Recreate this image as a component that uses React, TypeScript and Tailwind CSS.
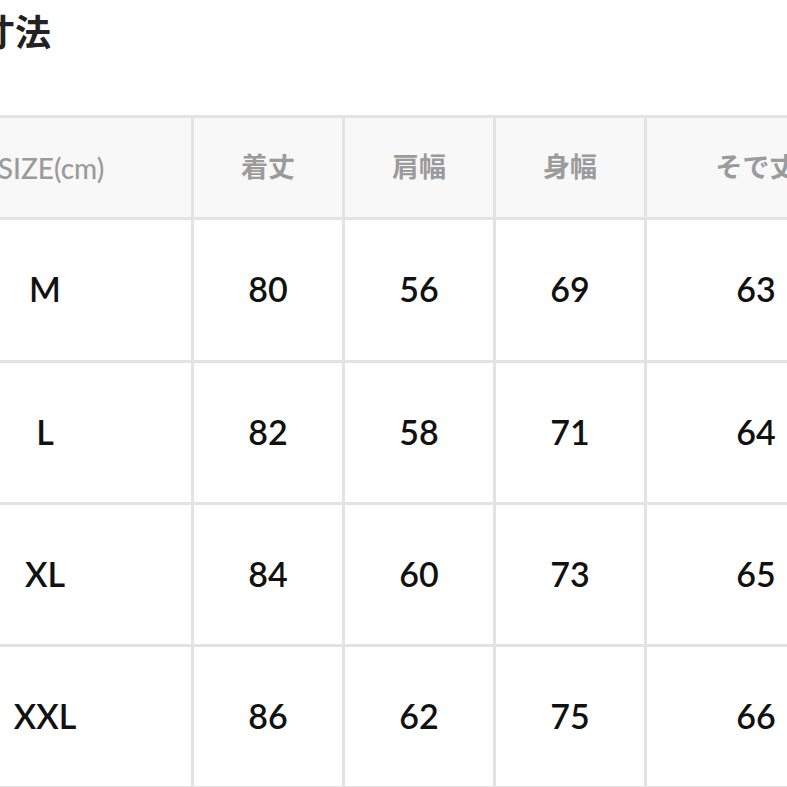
const columns = ["SIZE(cm)", "着丈", "肩幅", "身幅", "そで丈"]

const rows = [
  { size: "M", values: [80, 56, 69, 63] },
  { size: "L", values: [82, 58, 71, 64] },
  { size: "XL", values: [84, 60, 73, 65] },
  { size: "XXL", values: [86, 62, 75, 66] },
]

const font = { fontFamily: 'Lato, "Noto Sans CJK JP", sans-serif' }

export default function App() {
  return (
    <div className="w-[787px] h-[787px] overflow-hidden bg-white" style={font}>
      {/* Title */}
      <h1 className="-ml-[21px] pt-[14px] text-[36px] leading-none font-bold text-[#222]">
        寸法
      </h1>

      {/* Size table */}
      <div className="mt-[65px] w-[880px] bg-[#e3e3e3] py-[3px]">
        <div className="grid grid-cols-[191px_148px_148px_148px_223px] grid-rows-[99px_140px_139px_139px_139px] gap-[3px]">
          {columns.map((col, i) => (
            <div
              key={col}
              className={`flex items-center justify-center bg-[#f8f8f8] text-[#9b9b9b] ${
                i === 0
                  ? "pr-[89px] text-[28px] font-medium"
                  : i === 4
                    ? "pr-[5px] text-[27px] font-semibold"
                    : "text-[27px] font-semibold"
              }`}
            >
              <span className="whitespace-nowrap">{col}</span>
            </div>
          ))}

          {rows.map((row) => (
            <>
              <div
                key={row.size}
                className="flex items-center justify-center bg-white pr-[101px] pb-[3px] text-[34px] font-semibold text-[#111]"
              >
                {row.size}
              </div>
              {row.values.map((v, idx) => (
                <div
                  key={row.size + idx}
                  className={`flex items-center justify-center bg-white pb-[3px] text-[34px] font-semibold text-[#111] ${
                    idx === 3 ? "pr-[5px]" : ""
                  }`}
                >
                  {v}
                </div>
              ))}
            </>
          ))}
        </div>
      </div>
    </div>
  )
}
